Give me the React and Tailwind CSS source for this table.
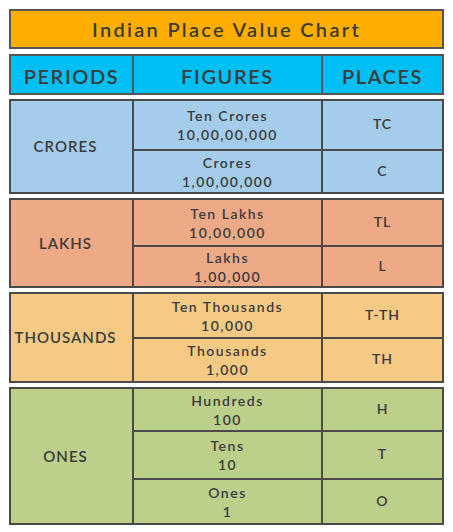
import React from 'react';

const periods = [
  {
    name: 'CRORES',
    bg: 'bg-[#a3cdea]',
    height: 'h-[95px]',
    rows: [
      { label: 'Ten Crores', value: '10,00,00,000', place: 'TC', h: 'h-[50px]' },
      { label: 'Crores', value: '1,00,00,000', place: 'C', h: 'flex-1' },
    ],
  },
  {
    name: 'LAKHS',
    bg: 'bg-[#eea986]',
    height: 'h-[90px]',
    rows: [
      { label: 'Ten Lakhs', value: '10,00,000', place: 'TL', h: 'h-[47px]' },
      { label: 'Lakhs', value: '1,00,000', place: 'L', h: 'flex-1' },
    ],
  },
  {
    name: 'THOUSANDS',
    bg: 'bg-[#f5ca84]',
    height: 'h-[91px]',
    rows: [
      { label: 'Ten Thousands', value: '10,000', place: 'T-TH', h: 'h-[45px]' },
      { label: 'Thousands', value: '1,000', place: 'TH', h: 'flex-1' },
    ],
  },
  {
    name: 'ONES',
    bg: 'bg-[#bccf8b]',
    height: 'h-[138px]',
    rows: [
      { label: 'Hundreds', value: '100', place: 'H', h: 'h-[43px]' },
      { label: 'Tens', value: '10', place: 'T', h: 'h-[48px]' },
      { label: 'Ones', value: '1', place: 'O', h: 'flex-1' },
    ],
  },
];

const App = () => {
  return (
    <div
      className="w-[453px] h-[532px] bg-white px-[9px] pt-[9px] flex flex-col text-[#3b3b3b]"
      style={{ fontFamily: 'Lato, "Noto Sans", sans-serif' }}
    >
      <div className="h-[40px] bg-[#ffae00] border-2 border-[#555] flex items-center justify-center text-[20px] font-semibold tracking-[2.3px]">
        Indian Place Value Chart
      </div>

      <div className="mt-[5px] h-[41px] bg-[#00bff2] border-2 border-[#555] flex text-[20px] font-semibold tracking-[1.6px]">
        <div className="w-[123px] border-r-2 border-[#555] flex items-center justify-center pt-[3px]">PERIODS</div>
        <div className="w-[189px] border-r-2 border-[#555] flex items-center justify-center pt-[3px]">FIGURES</div>
        <div className="flex-1 flex items-center justify-center pt-[3px]">PLACES</div>
      </div>

      {periods.map((p) => (
        <div key={p.name} className={`mt-[4px] ${p.height} ${p.bg} border-2 border-[#4a4a4a] flex font-semibold`}>
          <div className="w-[123px] border-r-2 border-[#4a4a4a] flex items-center justify-center pr-[12px] text-[15px] tracking-[1px]">
            {p.name}
          </div>
          <div className="flex-1 flex flex-col">
            {p.rows.map((r, i) => (
              <div
                key={r.place}
                className={`${r.h} flex ${i < p.rows.length - 1 ? 'border-b-2 border-[#4a4a4a]' : ''}`}
              >
                <div className="w-[189px] border-r-2 border-[#4a4a4a] flex flex-col items-center justify-center text-[14px] leading-[19px] tracking-[1.5px]">
                  <span>{r.label}</span>
                  <span>{r.value}</span>
                </div>
                <div className="flex-1 flex items-center justify-center text-[14px] tracking-[1px] pb-[3px]">
                  {r.place}
                </div>
              </div>
            ))}
          </div>
        </div>
      ))}
    </div>
  );
};

export default App;
